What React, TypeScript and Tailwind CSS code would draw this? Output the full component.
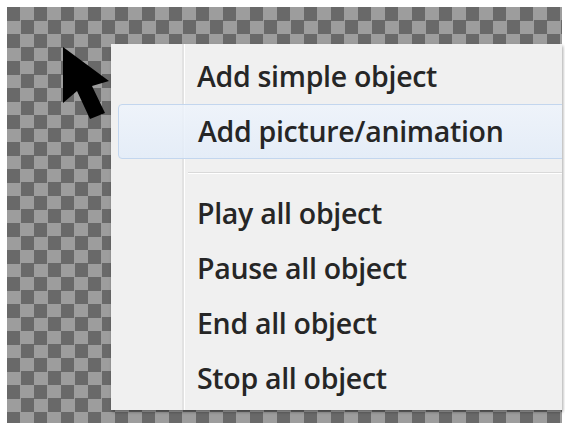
import React from 'react';

interface MenuEntry {
  label: string;
  active?: boolean;
}

const topItems: MenuEntry[] = [
  { label: 'Add simple object' },
  { label: 'Add picture/animation', active: true },
];

const playbackItems: MenuEntry[] = [
  { label: 'Play all object' },
  { label: 'Pause all object' },
  { label: 'End all object' },
  { label: 'Stop all object' },
];

const MenuRow: React.FC<{ item: MenuEntry }> = ({ item }) => (
  <div
    className={
      item.active
        ? 'h-[55px] flex items-center -ml-[67px] pl-[79px] -mr-[4px] rounded-[4px] border border-[#c3d6ee] bg-gradient-to-b from-[#eef4fcd0] to-[#e2ecf9d0]'
        : 'h-[55px] flex items-center pl-[12px]'
    }
  >
    <span className="text-[28.5px] font-semibold text-[#262626] tracking-[-0.3px]">{item.label}</span>
  </div>
);

const Cursor = () => (
  <svg className="absolute left-[49px] top-[33px] blur-[0.6px]" width="62" height="88" viewBox="56 40 62 88">
    <polygon points="63,47 63,103 77,91 90,119 105,113 92,86 109,81" fill="#000" />
  </svg>
);

export default function App() {
  return (
    <div
      className="w-[565px] h-[426px] bg-white pl-[7px] pt-[7px] pr-[3px] pb-[3px] overflow-hidden"
      style={{ fontFamily: '"Open Sans", "Noto Sans", sans-serif' }}
    >
      <div className="relative h-full bg-[conic-gradient(#9d9d9d_25%,#696969_0_50%,#9d9d9d_0_75%,#696969_0)] bg-size-[27px_27px] pl-[104px] pt-[37px] pb-[13px]">
        <div className="h-full flex bg-[#f0f0f0] shadow-[1px_2px_3px_rgba(0,0,0,0.35)] overflow-hidden">
          {/* icon gutter */}
          <div className="w-[74px] shrink-0 border-r border-r-white shadow-[inset_-2px_0_0_#e2e2e2]" />
          <div className="flex-1 flex flex-col pt-[5px]">
            {topItems.map((item) => (
              <MenuRow key={item.label} item={item} />
            ))}
            <div className="h-[27px] flex flex-col justify-center pl-[3px]">
              <div className="h-[1px] bg-[#d9d9d9]" />
              <div className="h-[1px] bg-white" />
            </div>
            {playbackItems.map((item) => (
              <MenuRow key={item.label} item={item} />
            ))}
          </div>
        </div>
        <Cursor />
      </div>
    </div>
  );
}
